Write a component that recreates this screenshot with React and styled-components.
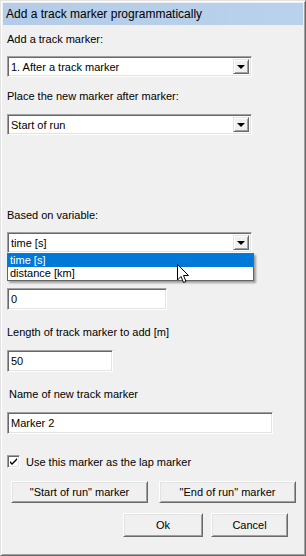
import styled, { createGlobalStyle } from "styled-components";

const GlobalStyle = createGlobalStyle`
  html, body {
    margin: 0;
    padding: 0;
    background: #f0f0f0;
  }
  * {
    box-sizing: border-box;
  }
`;

const Window = styled.div`
  position: relative;
  width: 306px;
  height: 556px;
  background: #f0f0f0;
  border-top: 1px solid #e3e3e3;
  border-left: 1px solid #e3e3e3;
  border-right: 1px solid #696969;
  border-bottom: 1px solid #696969;
  box-shadow: inset 1px 1px 0 #ffffff, inset -1px -1px 0 #a0a0a0;
  padding: 2px;
  font-family: "Liberation Sans", Arial, sans-serif;
  font-size: 11px;
  color: #000;
  overflow: hidden;
`;

const TitleBar = styled.div`
  height: 22px;
  display: flex;
  align-items: center;
  padding-left: 3px;
  background: linear-gradient(90deg, #b4cce7, #b9d1ea);
  font-size: 12px;
  color: #000;
`;

const Body = styled.div`
  position: relative;
  display: flex;
  flex-direction: column;
  align-items: flex-start;
  padding-left: 4px;
`;

const Label = styled.div`
  margin-top: ${(p) => p.$top}px;
  margin-left: ${(p) => p.$indent || 0}px;
  line-height: 13px;
  height: 13px;
  white-space: nowrap;
`;

const Sunken = styled.div`
  position: relative;
  margin-top: ${(p) => p.$top || 0}px;
  width: ${(p) => p.$width}px;
  height: ${(p) => p.$height || 22}px;
  background: #fff;
  border-top: 1px solid #a0a0a0;
  border-left: 1px solid #a0a0a0;
  border-right: 1px solid #ffffff;
  border-bottom: 1px solid #ffffff;
  box-shadow: inset 1px 1px 0 #696969, inset -1px -1px 0 #e3e3e3;
  display: flex;
  align-items: center;
  padding-left: 3px;
  white-space: nowrap;
`;

const ComboWrap = styled.div`
  position: relative;
  margin-top: ${(p) => p.$top}px;
`;

const ArrowButton = styled.div`
  position: absolute;
  top: 2px;
  right: 2px;
  bottom: 2px;
  width: 16px;
  background: #f0f0f0;
  border-top: 1px solid #e3e3e3;
  border-left: 1px solid #e3e3e3;
  border-right: 1px solid #696969;
  border-bottom: 1px solid #696969;
  box-shadow: inset 1px 1px 0 #ffffff, inset -1px -1px 0 #a0a0a0;
  display: flex;
  align-items: center;
  justify-content: center;
`;

const Triangle = styled.div`
  width: 0;
  height: 0;
  border-left: 4px solid transparent;
  border-right: 4px solid transparent;
  border-top: 4px solid #000;
  margin-top: 1px;
`;

const DropList = styled.div`
  position: absolute;
  left: 0;
  top: 21px;
  width: 247px;
  background: #fff;
  border: 1px solid #646464;
  box-shadow: 2px 2px 2px rgba(0, 0, 0, 0.35);
  z-index: 2;
`;

const DropItem = styled.div`
  height: 13px;
  line-height: 13px;
  padding-left: 2px;
  background: ${(p) => (p.$selected ? "#0078d7" : "#fff")};
  color: ${(p) => (p.$selected ? "#fff" : "#000")};
`;

const Cursor = styled.svg`
  position: absolute;
  left: 170px;
  top: 32px;
  z-index: 3;
`;

const CheckRow = styled.label`
  margin-top: ${(p) => p.$top}px;
  display: flex;
  align-items: center;
  gap: 6px;
  height: 13px;
`;

const CheckBox = styled.div`
  width: 13px;
  height: 13px;
  background: #fff;
  border-top: 1px solid #a0a0a0;
  border-left: 1px solid #a0a0a0;
  border-right: 1px solid #ffffff;
  border-bottom: 1px solid #ffffff;
  box-shadow: inset 1px 1px 0 #696969, inset -1px -1px 0 #e3e3e3;
  display: flex;
  align-items: center;
  justify-content: center;
`;

const ButtonRow = styled.div`
  margin-top: ${(p) => p.$top}px;
  margin-left: ${(p) => p.$left}px;
  display: flex;
  gap: ${(p) => p.$gap}px;
`;

const Button = styled.button`
  width: ${(p) => p.$width}px;
  height: ${(p) => p.$height}px;
  padding: 0;
  font-family: "Liberation Sans", Arial, sans-serif;
  font-size: 11px;
  color: #000;
  background: #f0f0f0;
  border-top: 1px solid #ffffff;
  border-left: 1px solid #ffffff;
  border-right: 1px solid #696969;
  border-bottom: 1px solid #696969;
  box-shadow: inset 1px 1px 0 #e3e3e3, inset -1px -1px 0 #a0a0a0;
  ${(p) => p.$default && "outline: 1px solid #000;"}
`;

function Combo({ top, value, children }) {
  return (
    <ComboWrap $top={top}>
      <Sunken $width={245} $height={21}>
        {value}
        <ArrowButton>
          <Triangle />
        </ArrowButton>
      </Sunken>
      {children}
    </ComboWrap>
  );
}

export default function App() {
  return (
    <>
      <GlobalStyle />
      <Window>
        <TitleBar>Add a track marker programmatically</TitleBar>
        <Body>
          <Label $top={8}>Add a track marker:</Label>
          <Combo top={10} value="1. After a track marker" />
          <Label $top={13}>Place the new marker after marker:</Label>
          <Combo top={11} value="Start of run" />
          <Label $top={74}>Based on variable:</Label>
          <Combo top={10} value="time [s]">
            <DropList>
              <DropItem $selected>time [s]</DropItem>
              <DropItem>distance [km]</DropItem>
            </DropList>
            <Cursor width="13" height="20" viewBox="0 0 13 20">
              <path
                d="M0.5 0.5 L0.5 16 L4 12.5 L6.5 18.5 L9 17.5 L6.5 11.5 L11.5 11.5 Z"
                fill="#fff"
                stroke="#000"
                strokeWidth="1"
              />
            </Cursor>
          </Combo>
          <Sunken $top={35} $width={160}>0</Sunken>
          <Label $top={16}>Length of track marker to add [m]</Label>
          <Sunken $top={11} $width={106}>50</Sunken>
          <Label $top={16} $indent={2}>Name of new track marker</Label>
          <Sunken $top={11} $width={266}>Marker 2</Sunken>
          <CheckRow $top={21}>
            <CheckBox>
              <svg width="9" height="9" viewBox="0 0 9 9">
                <path d="M1 4 L3 6 L8 1 L8 3 L3 8 L1 6 Z" fill="#000" />
              </svg>
            </CheckBox>
            Use this marker as the lap marker
          </CheckRow>
          <ButtonRow $top={13} $left={4} $gap={11}>
            <Button $width={137} $height={22}>"Start of run" marker</Button>
            <Button $width={137} $height={22}>"End of run" marker</Button>
          </ButtonRow>
          <ButtonRow $top={10} $left={116} $gap={8}>
            <Button $width={80} $height={24}>Ok</Button>
            <Button $width={77} $height={24}>Cancel</Button>
          </ButtonRow>
        </Body>
      </Window>
    </>
  );
}
